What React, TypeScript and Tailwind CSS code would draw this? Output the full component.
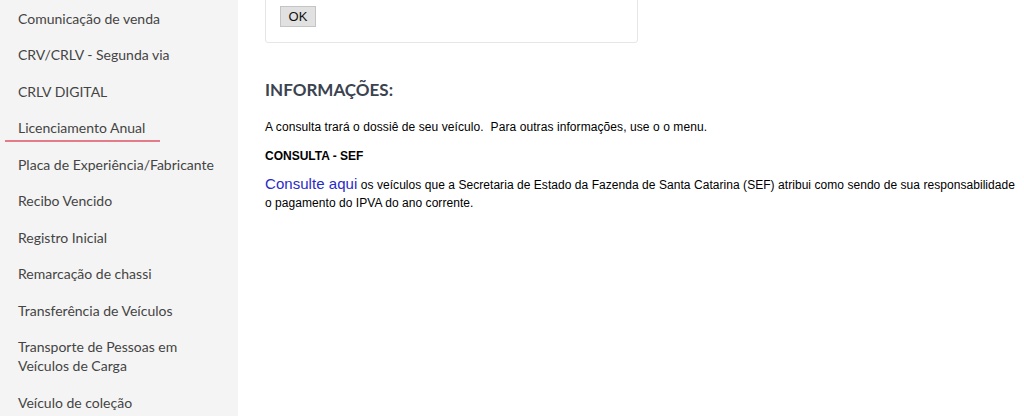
import React from 'react'

const menu = [
  'Comunicação de venda',
  'CRV/CRLV - Segunda via',
  'CRLV DIGITAL',
  'Licenciamento Anual',
  'Placa de Experiência/Fabricante',
  'Recibo Vencido',
  'Registro Inicial',
  'Remarcação de chassi',
  'Transferência de Veículos',
  'Transporte de Pessoas em Veículos de Carga',
  'Veículo de coleção',
]

export default function App() {
  return (
    <div className="flex h-[416px] w-[1024px] overflow-hidden bg-white">
      {/* Sidebar */}
      <aside className="w-[238px] shrink-0 bg-[#f4f4f4] font-['Lato',sans-serif] text-[14px] text-[#444]">
        <ul>
          {menu.map((label) => (
            <li key={label} className="relative py-[8.75px] pl-[18px] pr-[20px] leading-[19px]">
              {label === 'Transporte de Pessoas em Veículos de Carga' ? (
                <>
                  Transporte de Pessoas em
                  <br />
                  Veículos de Carga
                </>
              ) : (
                label
              )}
              {label === 'Licenciamento Anual' && (
                <span className="absolute left-[5px] top-[30.5px] h-[2px] w-[155px] bg-[#e47b88]" />
              )}
            </li>
          ))}
        </ul>
      </aside>

      {/* Main */}
      <main className="flex-1 pl-[27px] pr-[6px] font-['Liberation_Sans',Arial,sans-serif] text-black">
        <div className="-mt-[13px] w-[373px] rounded-[3px] border border-[#e6e6e6] px-[14px] pb-[14px] pt-[16px]">
          <button className="h-[21px] w-[36px] border border-[#c4c4c4] bg-[#e1e1e1] text-[13px] leading-[19px] text-[#111]">
            OK
          </button>
        </div>

        <h2 className="mt-[35px] font-['Lato',sans-serif] text-[17px] font-bold leading-[24px] text-[#3b4350]">
          INFORMAÇÕES:
        </h2>

        <p className="mt-[18px] text-[12px] leading-[14px] tracking-[0.08px]">
          A consulta trará o dossiê de seu veículo.&nbsp; Para outras informações, use o o menu.
        </p>

        <p className="mt-[15px] text-[12px] font-bold leading-[14px]">CONSULTA - SEF</p>

        <p className="mt-[12px] text-[12px] leading-[18px] tracking-[0.05px]">
          <a href="#" className="text-[15px] leading-[18px] text-[#2a2ac8]">
            Consulte aqui
          </a>{' '}
          os veículos que a Secretaria de Estado da Fazenda de Santa Catarina (SEF) atribui como sendo de sua
          responsabilidade o pagamento do IPVA do ano corrente.
        </p>
      </main>
    </div>
  )
}
